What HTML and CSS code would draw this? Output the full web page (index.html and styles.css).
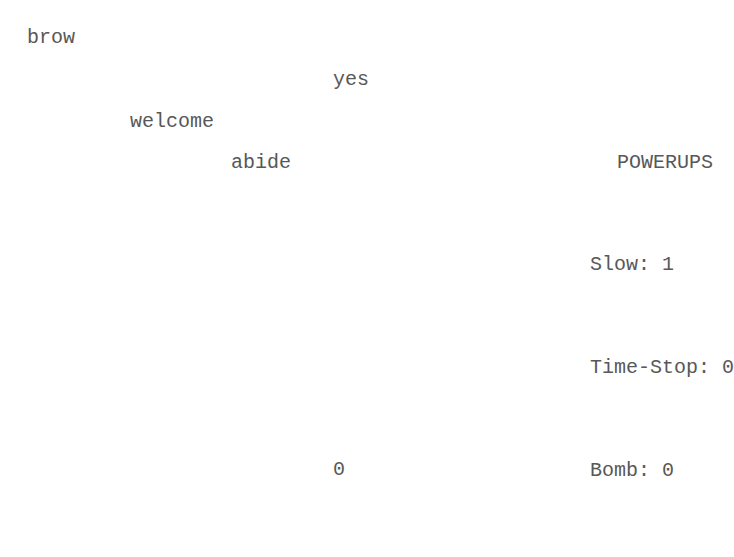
FILE: index.html
```html
<!DOCTYPE html>
<html>
<head>
<meta charset="utf-8">
<link rel="stylesheet" href="styles.css">
</head>
<body>
<div class="game">
  <div class="field">
    <span class="word" style="left:27px;top:26px">brow</span>
    <span class="word" style="left:333px;top:68px">yes</span>
    <span class="word" style="left:130px;top:110px">welcome</span>
    <span class="word" style="left:231px;top:151px">abide</span>
    <span class="score">0</span>
  </div>
  <div class="panel">
    <div class="title">POWERUPS</div>
    <div class="item">Slow: 1</div>
    <div class="item">Time-Stop: 0</div>
    <div class="item">Bomb: 0</div>
  </div>
</div>
</body>
</html>
```
FILE: styles.css
```css
html, body { margin: 0; padding: 0; background: #fff; }
body {
  font-family: "Liberation Mono", "Courier New", monospace;
  font-size: 20px;
  color: #585858;
  width: 734px;
  height: 557px;
  overflow: hidden;
}
.game { display: flex; height: 557px; }
.field { position: relative; width: 590px; height: 100%; flex: none; }
.word { position: absolute; line-height: 24px; white-space: pre; }
.score { position: absolute; left: 333px; top: 458px; line-height: 24px; }
.panel { display: flex; flex-direction: column; padding-top: 151px; gap: 79px; white-space: pre; }
.title { line-height: 24px; padding-left: 27px; }
.item { line-height: 24px; }
.title + .item { margin-top: -1px; }
```
